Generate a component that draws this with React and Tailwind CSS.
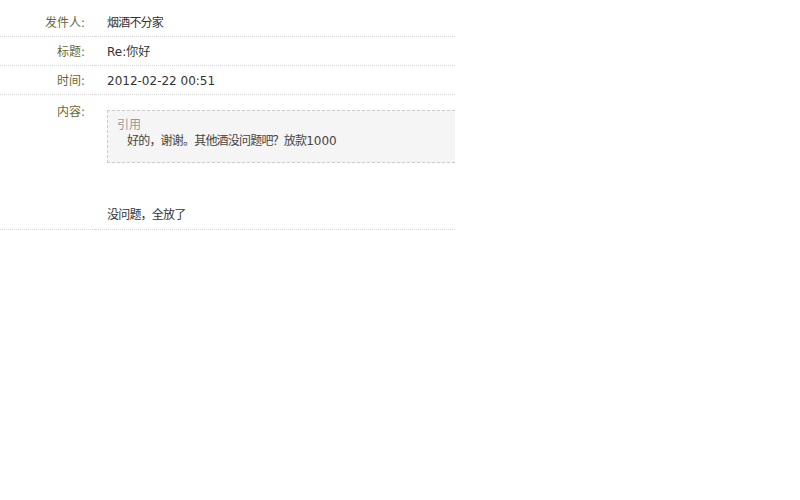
const rows = [
    { label: '发件人:', value: '烟酒不分家', cjk: true },
    { label: '标题:', value: 'Re:你好', cjk: false },
    { label: '时间:', value: '2012-02-22 00:51', cjk: false },
];

const App = () => {
    return (
        <div
            className="w-[800px] h-[500px] bg-white text-[12px] text-[#333]"
            style={{ fontFamily: '"DejaVu Sans", "Noto Sans CJK SC", sans-serif' }}
        >
            <table className="w-[455px] mt-[7px] border-collapse">
                <tbody>
                {rows.map((row) => (
                    <tr key={row.label} className="border-b border-dotted border-[#d6d6d6]">
                        <td className="w-[95px] h-[29px] pr-[10px] pt-[3px] text-right align-middle text-[#66663a]">
                            {row.label}
                        </td>
                        <td className="pl-[12px] h-[29px] pt-[3px] align-middle">
                            <span className={row.cjk ? 'tracking-[-0.8px]' : ''}>{row.value}</span>
                        </td>
                    </tr>
                ))}
                <tr className="border-b border-dotted border-[#d6d6d6]">
                    <td className="w-[95px] pr-[10px] pt-[8px] text-right align-top text-[#66663a]">
                        内容:
                    </td>
                    <td className="pl-[12px] pt-[15px] pb-[6px] align-top">
                        <div className="bg-[#f5f5f5] border border-r-0 border-dashed border-[#cccccc] pl-[9px] pt-[6px] pb-[13px] leading-[16px]">
                            <div className="text-[#999]">引用</div>
                            <div className="pl-[10px] text-[#444]">
                                <span className="tracking-[-0.8px]">好的，谢谢。其他酒没问题吧？放款</span>1000
                            </div>
                        </div>
                        <div className="mt-[44px] leading-[16px] tracking-[-0.8px]">没问题，全放了</div>
                    </td>
                </tr>
                </tbody>
            </table>
        </div>
    );
};

export default App;
